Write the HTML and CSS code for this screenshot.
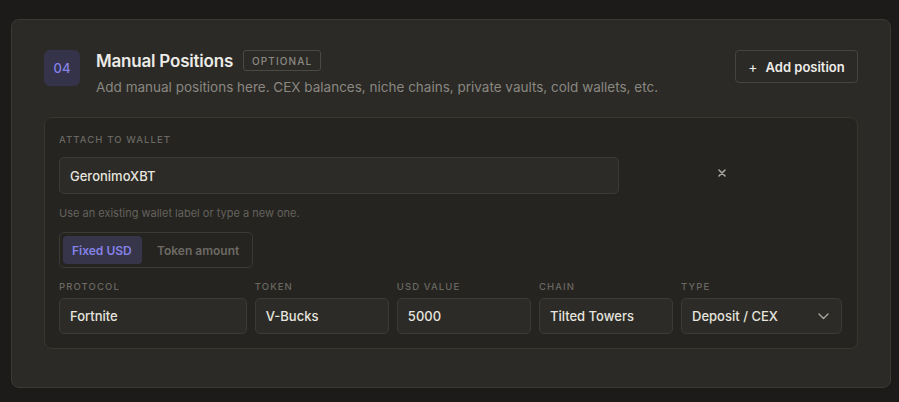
FILE: index.html
```html
<!DOCTYPE html>
<html lang="en">
<head>
<meta charset="utf-8">
<title>Manual Positions</title>
<link rel="stylesheet" href="styles.css">
</head>
<body>
<section class="card">
  <header class="head">
    <div class="step">04</div>
    <div class="head-text">
      <div class="title-row">
        <h2 class="title">Manual Positions</h2>
        <span class="tag">OPTIONAL</span>
      </div>
      <p class="subtitle">Add manual positions here. CEX balances, niche chains, private vaults, cold wallets, etc.</p>
    </div>
    <button class="add-btn"><span class="plus">+</span>Add position</button>
  </header>

  <div class="panel">
    <div class="label">ATTACH TO WALLET</div>
    <div class="wallet-row">
      <div class="input wallet-input">GeronimoXBT</div>
      <button class="remove" aria-label="Remove">
        <svg width="8" height="8" viewBox="0 0 8 8"><path d="M1 1L7 7M7 1L1 7" stroke="#a9a6a0" stroke-width="1.6" stroke-linecap="round"/></svg>
      </button>
    </div>
    <div class="help">Use an existing wallet label or type a new one.</div>

    <div class="toggle">
      <span class="opt active">Fixed USD</span>
      <span class="opt">Token amount</span>
    </div>

    <div class="fields">
      <div class="field">
        <div class="label">PROTOCOL</div>
        <div class="input">Fortnite</div>
      </div>
      <div class="field">
        <div class="label">TOKEN</div>
        <div class="input">V-Bucks</div>
      </div>
      <div class="field">
        <div class="label">USD VALUE</div>
        <div class="input">5000</div>
      </div>
      <div class="field">
        <div class="label">CHAIN</div>
        <div class="input">Tilted Towers</div>
      </div>
      <div class="field">
        <div class="label">TYPE</div>
        <div class="input select">Deposit / CEX
          <svg class="chev" width="11" height="7" viewBox="0 0 11 7"><path d="M1 1L5.5 5.5L10 1" fill="none" stroke="#a9a6a0" stroke-width="1.4" stroke-linecap="round" stroke-linejoin="round"/></svg>
        </div>
      </div>
    </div>
  </div>
</section>
</body>
</html>
```

FILE: styles.css
```css
* { box-sizing: border-box; }
html, body { margin: 0; padding: 0; }
body {
  background: #1c1b19;
  font-family: Inter, "Noto Sans", "Liberation Sans", sans-serif;
  color: #e8e6e1;
  padding: 19px 8px 14px 11px;
}
.card {
  width: 880px;
  background: #2b2a26;
  border: 1px solid #3a3934;
  border-radius: 8px;
  padding: 30px 32px 38px 32px;
}
.head {
  display: flex;
  align-items: flex-start;
  gap: 16px;
}
.step {
  width: 36px;
  height: 36px;
  border-radius: 6px;
  background: #34334a;
  color: #8582e6;
  font-size: 13px;
  font-weight: 500;
  display: flex;
  align-items: center;
  justify-content: center;
  flex: none;
}
.head-text { flex: 1; }
.title-row {
  display: flex;
  align-items: center;
  gap: 10px;
  height: 21px;
}
.title {
  margin: 0;
  font-size: 17px;
  font-weight: 600;
  color: #ecebe7;
  letter-spacing: -0.2px;
}
.tag {
  border: 1px solid #4a4944;
  border-radius: 3px;
  height: 21px;
  padding: 0 8px;
  display: flex;
  align-items: center;
  font-size: 10px;
  letter-spacing: 1.1px;
  color: #8c8983;
  font-weight: 500;
}
.subtitle {
  margin: 8px 0 0 0;
  font-size: 13.5px;
  color: #8a8781;
  line-height: 17px;
}
.add-btn {
  flex: none;
  height: 33px;
  width: 123px;
  border: 1px solid #45443f;
  border-radius: 4px;
  background: #2b2a26;
  color: #efede9;
  font-family: inherit;
  font-size: 13px;
  font-weight: 600;
  display: flex;
  align-items: center;
  justify-content: center;
  gap: 8px;
}
.plus { font-weight: 400; font-size: 14px; }
.panel {
  margin-top: 21px;
  background: #252420;
  border: 1px solid #37362f;
  border-radius: 8px;
  padding: 16px 15px 14px 14px;
}
.label {
  font-size: 9.5px;
  letter-spacing: 1.1px;
  color: #6a6862;
  font-weight: 500;
  line-height: 12px;
}
.wallet-row {
  display: flex;
  align-items: center;
  margin-top: 11px;
}
.input {
  height: 37px;
  background: #2c2b27;
  border: 1px solid #3b3a35;
  border-radius: 5px;
  padding: 0 10px;
  display: flex;
  align-items: center;
  font-size: 13px;
  font-weight: 500;
  color: #e6e4df;
}
.wallet-input { width: 560px; }
.remove {
  margin-left: 95px;
  background: none;
  border: 0;
  padding: 0;
  width: 16px;
  height: 16px;
  display: flex;
  align-items: center;
  justify-content: center;
  margin-top: -6px;
}
.help {
  margin-top: 12px;
  font-size: 11px;
  color: #64625d;
  line-height: 15px;
}
.toggle {
  margin-top: 11px;
  display: inline-flex;
  border: 1px solid #3b3a35;
  border-radius: 5px;
  padding: 3px;
  gap: 0;
}
.opt {
  height: 28px;
  display: flex;
  align-items: center;
  padding: 0 10px 0 15px;
  font-size: 12px;
  font-weight: 600;
  color: #6d6a65;
  border-radius: 4px;
}
.opt.active {
  background: #36354a;
  color: #8582e6;
  padding: 0 10px 0 9px;
  width: 79px;
}
.fields {
  margin-top: 13px;
  display: grid;
  grid-template-columns: 1.4fr 1fr 1fr 1fr 1.2fr;
  gap: 8px;
}
.field .label { margin-bottom: 5px; }
.field .input { height: 36px; }
.select { justify-content: space-between; padding-right: 12px; }
.chev { flex: none; }
```
